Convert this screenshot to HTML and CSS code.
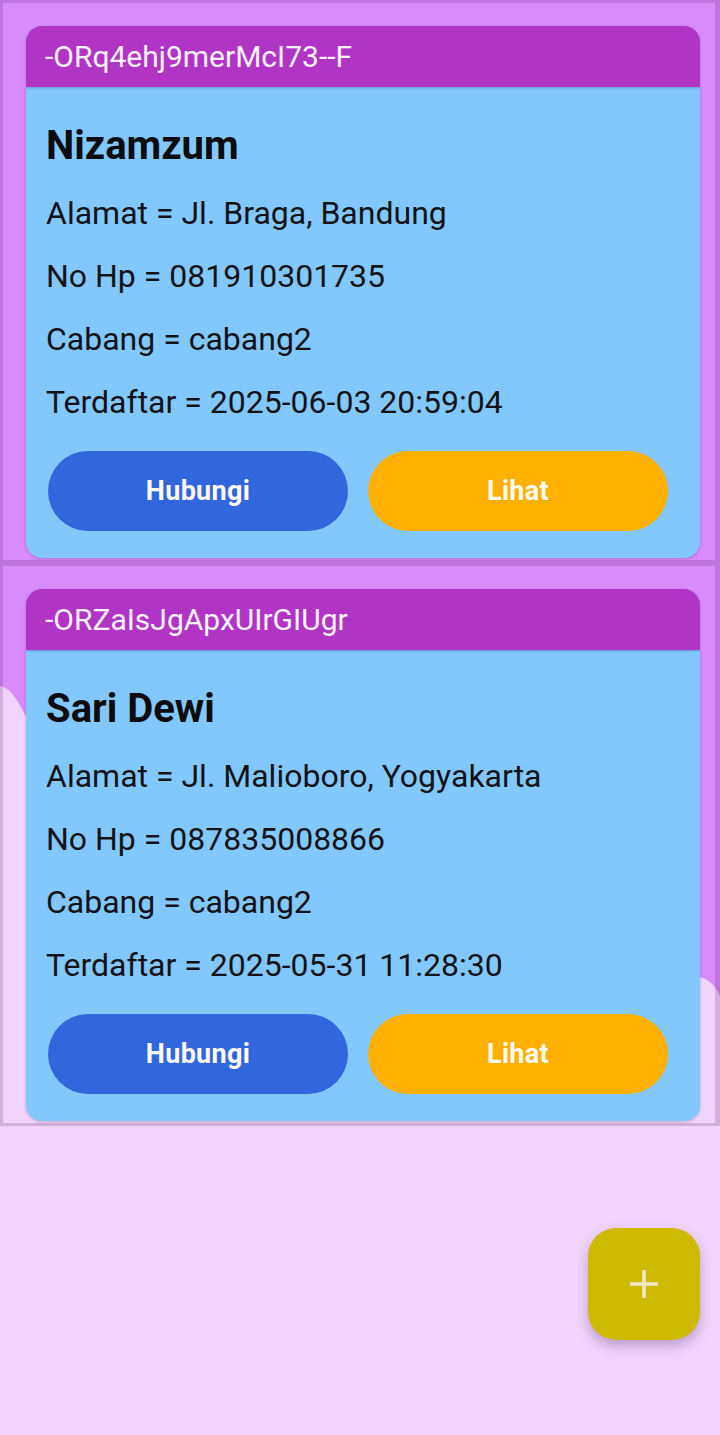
FILE: index.html
```html
<!DOCTYPE html>
<html>
<head>
<meta charset="utf-8">
<link rel="stylesheet" href="styles.css">
</head>
<body>
<div class="screen">
  <svg class="bg-wave" width="720" height="1435" viewBox="0 0 720 1435" aria-hidden="true">
    <path d="M0 0 H720 V996 C716 986 708 978 696 976 L40 740 C28 730 20 690 0 686 Z" fill="#d98bfa"/>
  </svg>
  <ul class="list">
    <li class="row">
      <div class="card">
        <div class="card-head">-ORq4ehj9merMcI73--F</div>
        <div class="card-body">
          <h2 class="name">Nizamzum</h2>
          <p class="line">Alamat = Jl. Braga, Bandung</p>
          <p class="line">No Hp = 081910301735</p>
          <p class="line">Cabang = cabang2</p>
          <p class="line">Terdaftar = 2025-06-03 20:59:04</p>
          <div class="actions">
            <button class="btn btn-call">Hubungi</button>
            <button class="btn btn-view">Lihat</button>
          </div>
        </div>
      </div>
    </li>
    <li class="row">
      <div class="card">
        <div class="card-head">-ORZaIsJgApxUIrGIUgr</div>
        <div class="card-body">
          <h2 class="name">Sari Dewi</h2>
          <p class="line">Alamat = Jl. Malioboro, Yogyakarta</p>
          <p class="line">No Hp = 087835008866</p>
          <p class="line">Cabang = cabang2</p>
          <p class="line">Terdaftar = 2025-05-31 11:28:30</p>
          <div class="actions">
            <button class="btn btn-call">Hubungi</button>
            <button class="btn btn-view">Lihat</button>
          </div>
        </div>
      </div>
    </li>
  </ul>
  <button class="fab" aria-label="Tambah">
    <svg width="30" height="30" viewBox="0 0 30 30"><path d="M15 1 V29 M1 15 H29" stroke="#f4e8c8" stroke-width="3.6" fill="none"/></svg>
  </button>
</div>
</body>
</html>
```

FILE: styles.css
```css
* { box-sizing: border-box; }
html, body { margin: 0; padding: 0; }
body {
  font-family: Roboto, "Noto Sans", "Liberation Sans", sans-serif;
  background: #f0d4fc;
}
.screen {
  position: relative;
  width: 720px;
  height: 1435px;
  overflow: hidden;
  background: #f0d4fc;
}
.bg-wave {
  position: absolute;
  left: 0;
  top: 0;
  z-index: 0;
}
.list {
  position: relative;
  z-index: 1;
  list-style: none;
  margin: 0;
  padding: 0;
}
.row {
  display: flex;
  border: 3px solid rgba(90, 30, 110, 0.2);
  border-right-width: 5px;
  padding: 23px 15px 2px 23px;
}
.card {
  flex: 1;
  background: #82c8fc;
  border-radius: 16px;
  overflow: hidden;
  box-shadow: 0 1px 3px rgba(40, 20, 80, 0.25);
}
.card-head {
  height: 61px;
  background: #b035c4;
  color: #fbf2fd;
  font-size: 30px;
  line-height: 61px;
  padding-left: 19px;
  box-shadow: 0 1px 2px rgba(40, 20, 80, 0.3);
  position: relative;
}
.card-body {
  display: flex;
  flex-direction: column;
  padding: 37px 32px 27px 20px;
}
.name {
  margin: 0 0 14px 0;
  font-size: 40px;
  font-weight: 700;
  line-height: 44px;
  color: #0c0c0e;
}
.line {
  margin: 0;
  font-size: 32px;
  line-height: 63px;
  color: #111318;
  white-space: nowrap;
}
.actions {
  display: flex;
  gap: 20px;
  margin-top: 17px;
  padding-left: 2px;
}
.btn {
  width: 300px;
  height: 80px;
  border: none;
  border-radius: 40px;
  font-family: Roboto, "Noto Sans", sans-serif;
  font-size: 27px;
  font-weight: 700;
  color: #fdfaf4;
  letter-spacing: 0.3px;
}
.btn-call { background: #3266dc; }
.btn-view { background: #ffb000; }
.fab {
  position: absolute;
  left: 588px;
  top: 1228px;
  width: 112px;
  height: 112px;
  border: none;
  border-radius: 28px;
  background: #ceb903;
  box-shadow: 0 6px 12px rgba(80, 40, 100, 0.3);
  display: flex;
  align-items: center;
  justify-content: center;
  padding: 0;
  z-index: 2;
}
```
